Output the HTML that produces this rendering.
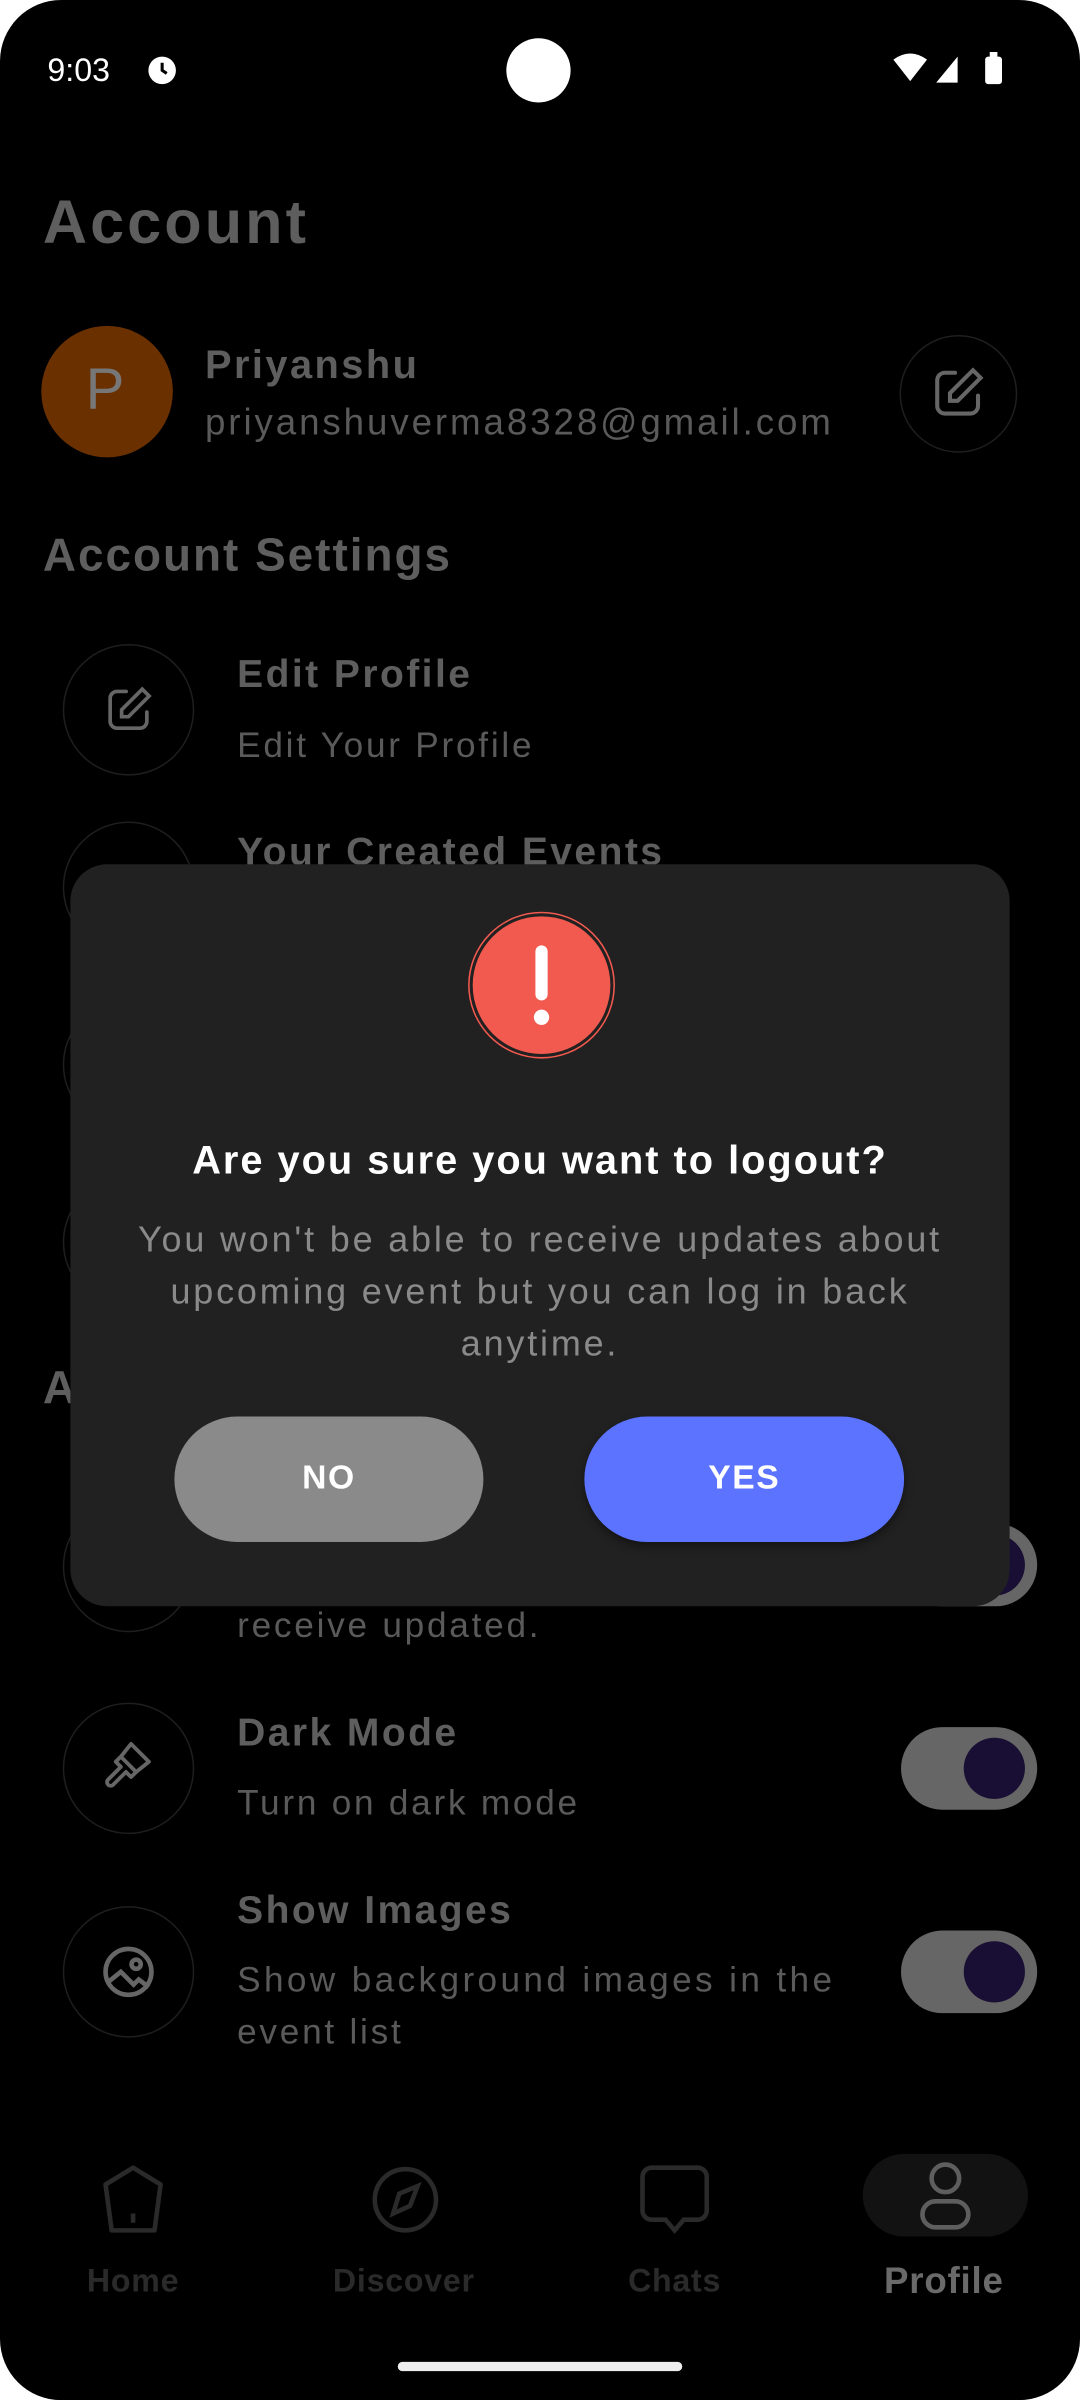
<!DOCTYPE html>
<html><head><meta charset="utf-8"><style>
html,body{margin:0;padding:0;background:#fff;width:1080px;height:2400px;overflow:hidden}
#w{position:absolute;left:0;top:0;width:706px;height:1569px;transform:scale(1.52975);transform-origin:0 0;background:#000;border-radius:40px;overflow:hidden;font-family:"Liberation Sans",sans-serif}
.a{position:absolute;white-space:nowrap}
.c{position:absolute;border:1.5px solid #1e1e1e;border-radius:50%;box-sizing:border-box}
.t{color:#5e5e5e;font-weight:bold;font-size:25.5px;letter-spacing:1.6px}
.s{color:#5a5a5a;font-size:23px;letter-spacing:1.8px}
.tg{position:absolute;width:89px;height:54px;border-radius:27px;background:#666}
.tg i{position:absolute;right:8px;top:7px;width:40px;height:40px;border-radius:50%;background:#190e33}
svg{position:absolute}
</style></head><body><div id="w">
<div class="a" style="left:31px;top:35px;color:#fff;font-size:21px">9:03</div>
<svg style="left:96px;top:36px" width="20" height="20" viewBox="0 0 20 20"><circle cx="10" cy="10" r="9" fill="#fff"/><path d="M10 5v5l3 2" stroke="#000" stroke-width="2" fill="none"/></svg>
<div style="position:absolute;left:331px;top:25px;width:42px;height:42px;border-radius:50%;background:#fff"></div>
<svg style="left:582px;top:33px" width="80" height="24" viewBox="0 0 80 24"><path d="M2 6 Q13 -2 24 6 L13 20Z" fill="#fff"/><path d="M30 21 L44 4 V21Z" fill="#fff"/><rect x="62" y="4" width="11" height="18" rx="2" fill="#fff"/><rect x="65" y="1" width="5" height="4" fill="#fff"/></svg>

<div class="a" style="left:28px;top:124px;color:#5e5e5e;font-weight:bold;font-size:40px;letter-spacing:2px">Account</div>
<div style="position:absolute;left:27px;top:213px;width:86px;height:86px;border-radius:50%;background:#6a3000"></div>
<div class="a" style="left:56px;top:234px;color:#777;font-size:38px">P</div>
<div class="a t" style="left:134px;top:223px;font-size:26px">Priyanshu</div>
<div class="a s" style="left:134px;top:263px;font-size:24px;letter-spacing:1.9px">priyanshuverma8328@gmail.com</div>
<div class="c" style="left:588px;top:219px;width:77px;height:77px"></div>
<svg style="left:606px;top:237px" width="40" height="40" viewBox="0 0 24 24" fill="none" stroke="#666" stroke-width="1.6" stroke-linecap="round"><path d="M11 4H7a3 3 0 0 0-3 3v10a3 3 0 0 0 3 3h10a3 3 0 0 0 3-3v-4"/><path d="M18 3l3 3-9 9H9v-3z"/></svg>

<div class="a t" style="left:28px;top:347px;font-size:30px;letter-spacing:1.3px">Account Settings</div>
<div class="c" style="left:41px;top:421px;width:86px;height:86px"></div>
<svg style="left:66px;top:446px" width="36" height="36" viewBox="0 0 24 24" fill="none" stroke="#666" stroke-width="1.6" stroke-linecap="round"><path d="M11 4H7a3 3 0 0 0-3 3v10a3 3 0 0 0 3 3h10a3 3 0 0 0 3-3v-4"/><path d="M18 3l3 3-9 9H9v-3z"/></svg>
<div class="a t" style="left:155px;top:427px">Edit Profile</div>
<div class="a s" style="left:155px;top:474px">Edit Your Profile</div>
<div class="c" style="left:41px;top:537px;width:86px;height:86px"></div>
<div class="a t" style="left:155px;top:543px">Your Created Events</div>
<div class="c" style="left:41px;top:653px;width:86px;height:86px"></div>
<div class="c" style="left:41px;top:769px;width:86px;height:86px"></div>
<div class="a t" style="left:28px;top:891px;font-size:30px">A</div>
<div class="c" style="left:41px;top:981px;width:86px;height:86px"></div>
<div class="tg" style="left:589px;top:996px"><i></i></div>
<div class="a s" style="left:155px;top:1049px">receive updated.</div>

<div class="c" style="left:41px;top:1113px;width:86px;height:86px"></div>
<svg style="left:64px;top:1135px" width="40" height="40" viewBox="0 0 24 24" fill="none" stroke="#666" stroke-width="1.5" stroke-linejoin="round"><path d="M13 3l7 7-5 4-6-6z"/><path d="M9 8l-2 2 2 2-5 5a1.4 1.4 0 0 0 2 2l5-5 2 2 2-2"/></svg>
<div class="a t" style="left:155px;top:1119px">Dark Mode</div>
<div class="a s" style="left:155px;top:1165px">Turn on dark mode</div>
<div class="tg" style="left:589px;top:1129px"><i></i></div>

<div class="c" style="left:41px;top:1246px;width:86px;height:86px"></div>
<svg style="left:64px;top:1269px" width="40" height="40" viewBox="0 0 24 24" fill="none" stroke="#666" stroke-width="1.8"><circle cx="12" cy="12" r="9"/><circle cx="15" cy="9" r="1.8"/><path d="M4 16l5-4 5 5 2-2 4 3"/></svg>
<div class="a t" style="left:155px;top:1235px">Show Images</div>
<div class="a s" style="left:155px;top:1281px;letter-spacing:2.2px">Show background images in the</div>
<div class="a s" style="left:155px;top:1315px">event list</div>
<div class="tg" style="left:589px;top:1262px"><i></i></div>

<!-- nav -->
<svg style="left:64px;top:1414px" width="46" height="48" viewBox="0 0 46 48" fill="none" stroke="#2a2a2a" stroke-width="3"><path d="M23 3 L41 14 L37 44 H9 L5 14Z" stroke-linejoin="round"/><path d="M23 33v6"/></svg>
<svg style="left:241px;top:1414px" width="48" height="48" viewBox="0 0 48 48" fill="none" stroke="#2a2a2a" stroke-width="3"><circle cx="24" cy="24" r="20"/><path d="M32 15 L27 28 L16 33 L20 20Z"/></svg>
<svg style="left:418px;top:1415px" width="46" height="48" viewBox="0 0 46 48" fill="none" stroke="#2a2a2a" stroke-width="3"><path d="M8 2h30a6 6 0 0 1 6 6v22a6 6 0 0 1-6 6H29l-6 7-6-7H8a6 6 0 0 1-6-6V8a6 6 0 0 1 6-6z"/></svg>
<div style="position:absolute;left:564px;top:1408px;width:108px;height:54px;border-radius:27px;background:#121212"></div>
<svg style="left:599px;top:1412px" width="38" height="48" viewBox="0 0 38 48" fill="none" stroke="#5e5e5e" stroke-width="3"><circle cx="19" cy="12" r="9"/><rect x="4" y="27" width="30" height="17" rx="8.5"/></svg>
<div class="a" style="left:87px;top:1480px;transform:translateX(-50%);color:#2a2a2a;font-weight:bold;font-size:21px;letter-spacing:.5px">Home</div>
<div class="a" style="left:264px;top:1480px;transform:translateX(-50%);color:#2a2a2a;font-weight:bold;font-size:21px;letter-spacing:.5px">Discover</div>
<div class="a" style="left:441px;top:1480px;transform:translateX(-50%);color:#2a2a2a;font-weight:bold;font-size:21px;letter-spacing:.5px">Chats</div>
<div class="a" style="left:617px;top:1478px;transform:translateX(-50%);color:#6a6a6a;font-weight:bold;font-size:24px;letter-spacing:.5px">Profile</div>
<div style="position:absolute;left:260px;top:1544px;width:186px;height:6px;border-radius:3px;background:#eee"></div>

<!-- dialog -->
<div style="position:absolute;left:46px;top:565px;width:614px;height:485px;border-radius:24px;background:#212121"></div>
<div style="position:absolute;left:306px;top:596px;width:96px;height:96px;border-radius:50%;border:1.5px solid #f25a4f;box-sizing:border-box"></div>
<div style="position:absolute;left:309px;top:599px;width:90px;height:90px;border-radius:50%;background:#f25a4f"></div>
<div style="position:absolute;left:350px;top:618px;width:8px;height:36px;border-radius:4px;background:#fff"></div>
<div style="position:absolute;left:349px;top:660px;width:10px;height:10px;border-radius:50%;background:#fff"></div>
<div class="a" style="left:0;width:706px;text-align:center;top:743px;color:#fff;font-weight:bold;font-size:26px;letter-spacing:1.3px">Are you sure you want to logout?</div>
<div class="a" style="left:0;width:706px;text-align:center;top:793px;color:#8a8a8a;font-size:23.5px;line-height:34px;white-space:normal;letter-spacing:1.85px">You won't be able to receive updates about<br>upcoming event but you can log in back<br>anytime.</div>
<div style="position:absolute;left:114px;top:926px;width:202px;height:82px;border-radius:41px;background:#8a8a8a;color:#fff;font-weight:bold;font-size:22px;text-align:center;line-height:80px;letter-spacing:1px">NO</div>
<div style="position:absolute;left:382px;top:926px;width:209px;height:82px;border-radius:41px;background:#5b73ff;color:#fff;font-weight:bold;font-size:22px;text-align:center;line-height:80px;letter-spacing:1px;box-shadow:0 3px 6px rgba(0,0,0,.4)">YES</div>
</div></body></html>
